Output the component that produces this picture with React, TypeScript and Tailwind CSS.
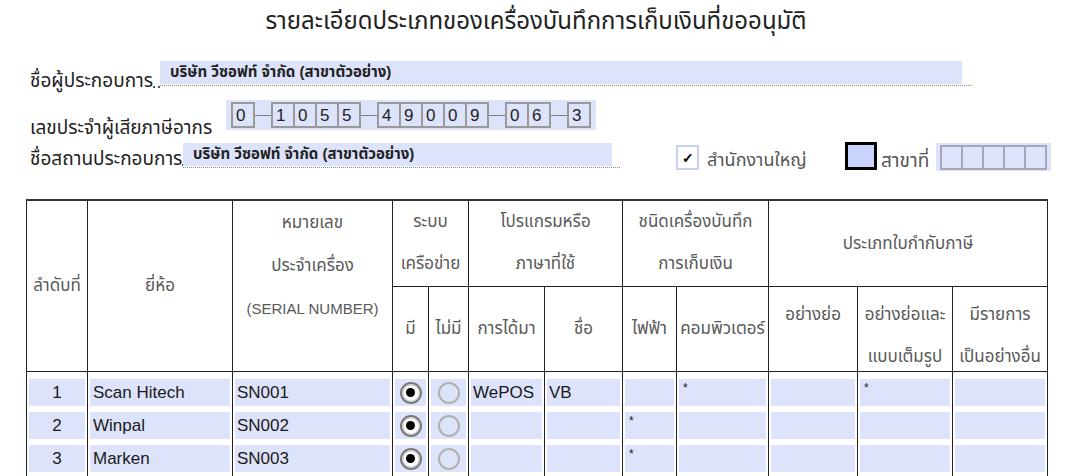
const taxGroups = [["0"], ["1", "0", "5", "5"], ["4", "9", "0", "0", "9"], ["0", "6"], ["3"]];

type Row = {
  no: string;
  brand: string;
  serial: string;
  acquired: string;
  name: string;
  electric: string;
  computer: string;
  abbreviated: string;
  full: string;
  other: string;
};

const rows: Row[] = [
  { no: "1", brand: "Scan Hitech", serial: "SN001", acquired: "WePOS", name: "VB", electric: "", computer: "*", abbreviated: "", full: "*", other: "" },
  { no: "2", brand: "Winpal", serial: "SN002", acquired: "", name: "", electric: "*", computer: "", abbreviated: "", full: "", other: "" },
  { no: "3", brand: "Marken", serial: "SN003", acquired: "", name: "", electric: "*", computer: "", abbreviated: "", full: "", other: "" },
];

function Radio({ checked }: { checked: boolean }) {
  return checked ? (
    <span className="flex h-[22px] w-[22px] items-center justify-center rounded-full border-2 border-[#7a7a7a] bg-white shadow-[inset_0_0_0_1.5px_#d4d4d4]">
      <span className="h-[9px] w-[9px] rounded-full bg-black" />
    </span>
  ) : (
    <span className="block h-[22px] w-[22px] rounded-full border-2 border-[#b0b0b0] shadow-[inset_0_0_0_1px_#e4e4e4]" />
  );
}

function Fill({ children, className = "" }: { children?: React.ReactNode; className?: string }) {
  return <div className={`mx-[2px] mt-[2px] flex h-[27px] items-center bg-[#dde3fb] ${className}`}>{children}</div>;
}

function Star({ value }: { value: string }) {
  return <Fill className="items-start px-[4px] pt-[3px] text-[12px] leading-none">{value}</Fill>;
}

export default function App() {
  return (
    <div className="h-[476px] w-[1072px] overflow-hidden bg-white font-['Liberation_Sans','Noto_Sans_Thai','Noto_Sans',sans-serif] text-[#222]">
      <h1 className="h-[58px] pt-[5px] text-center text-[24px] leading-[32px] text-[#222]">
        รายละเอียดประเภทของเครื่องบันทึกการเก็บเงินที่ขออนุมัติ
      </h1>

      {/* ชื่อผู้ประกอบการ */}
      <div className="flex h-[36px] pl-[30px]">
        <div className="flex w-[130px] items-end self-end overflow-hidden">
          <span className="whitespace-nowrap text-[19px] leading-[26px]">ชื่อผู้ประกอบการ</span>
          <span className="mb-[6px] h-[2px] flex-1 border-b-2 border-dotted border-[#555]" />
        </div>
        <div className="mt-[3px] h-[25px] w-[811px] border-b border-dotted border-[#8a8a8a]">
          <div className="flex h-[23px] w-[802px] items-center bg-[#dde3fb] pl-[10px] text-[15px] font-bold">
            บริษัท วีซอฟท์ จำกัด (สาขาตัวอย่าง)
          </div>
        </div>
      </div>

      {/* เลขประจำผู้เสียภาษีอากร */}
      <div className="flex h-[46px] pl-[30px]">
        <span className="-mb-[1px] w-[196px] self-end whitespace-nowrap text-[19px] leading-[26px]">เลขประจำผู้เสียภาษีอากร</span>
        <div className="mt-[6px] flex h-[30px] items-center self-start bg-[#dde3fb] px-[5px]">
          {taxGroups.map((group, gi) => (
            <div key={gi} className="flex items-center">
              {gi > 0 && <span className="h-px w-[16px] bg-[#7d7d7d]" />}
              {group.map((d, di) => (
                <span
                  key={di}
                  className={`flex h-[26px] w-[24px] items-center border-2 border-[#9a9a9a] pl-[3px] text-[17px] leading-none ${di > 0 ? "-ml-[2px]" : ""}`}
                >
                  {d}
                </span>
              ))}
            </div>
          ))}
        </div>
      </div>

      {/* ชื่อสถานประกอบการ */}
      <div className="flex h-[59px] pl-[30px]">
        <div className="flex w-[153px] items-end self-start overflow-hidden pt-[6px]">
          <span className="whitespace-nowrap text-[19px] leading-[26px]">ชื่อสถานประกอบการ</span>
          <span className="mb-[6px] h-[2px] flex-1 border-b-2 border-dotted border-[#555]" />
        </div>
        <div className="mt-[3px] h-[25px] w-[437px] border-b border-dotted border-[#8a8a8a]">
          <div className="flex h-[23px] w-[429px] items-center bg-[#dde3fb] pl-[10px] text-[15px] font-bold">
            บริษัท วีซอฟท์ จำกัด (สาขาตัวอย่าง)
          </div>
        </div>
        <div className="ml-[56px] mt-[5px] flex h-[25px] w-[23px] items-center justify-center self-start border-2 border-[#c7d0f6] bg-white text-[14px] font-bold leading-none text-black">
          ✓
        </div>
        <span className="ml-[8px] w-[138px] self-start whitespace-nowrap pt-[8px] text-[18px] leading-[24px] text-[#555]">สำนักงานใหญ่</span>
        <div className="mt-[2px] h-[28px] w-[32px] self-start border-[3px] border-black bg-[#c9d3fb]" />
        <span className="ml-[4px] w-[55px] self-start whitespace-nowrap pt-[9px] text-[19px] leading-[24px] text-[#555]">สาขาที่</span>
        <div className="mt-[3px] flex h-[28px] items-center self-start bg-[#dde3fb] px-[4px]">
          {[0, 1, 2, 3, 4].map((i) => (
            <span key={i} className={`h-[25px] w-[23px] border-2 border-[#a3a7b8] ${i > 0 ? "-ml-[2px]" : ""}`} />
          ))}
        </div>
      </div>

      <table className="ml-[26px] w-[1021px] table-fixed border-collapse text-[17px] text-[#595959]">
        <colgroup>
          <col className="w-[61px]" />
          <col className="w-[145px]" />
          <col className="w-[160px]" />
          <col className="w-[36px]" />
          <col className="w-[40px]" />
          <col className="w-[76px]" />
          <col className="w-[78px]" />
          <col className="w-[54px]" />
          <col className="w-[92px]" />
          <col className="w-[89px]" />
          <col className="w-[95px]" />
          <col className="w-[95px]" />
        </colgroup>
        <thead>
          <tr className="h-[86px] border-t-2 border-[#333]">
            <th rowSpan={2} className="border border-[#222] p-0 text-center font-normal">ลำดับที่</th>
            <th rowSpan={2} className="border border-[#222] p-0 text-center font-normal">ยี่ห้อ</th>
            <th rowSpan={2} className="border border-[#222] p-0 text-center align-top font-normal leading-[43px]">
              หมายเลข
              <br />
              ประจำเครื่อง
              <br />
              <span className="text-[15px]">(SERIAL NUMBER)</span>
            </th>
            <th colSpan={2} className="border border-[#222] p-0 text-center font-normal leading-[42px]">
              ระบบ
              <br />
              เครือข่าย
            </th>
            <th colSpan={2} className="border border-[#222] p-0 text-center font-normal leading-[42px]">
              โปรแกรมหรือ
              <br />
              ภาษาที่ใช้
            </th>
            <th colSpan={2} className="border border-[#222] p-0 text-center font-normal leading-[42px]">
              ชนิดเครื่องบันทึก
              <br />
              การเก็บเงิน
            </th>
            <th colSpan={3} className="border border-[#222] p-0 text-center font-normal">ประเภทใบกำกับภาษี</th>
          </tr>
          <tr className="h-[85px]">
            <th className="border border-[#222] p-0 text-center font-normal">มี</th>
            <th className="border border-[#222] p-0 text-center font-normal">ไม่มี</th>
            <th className="border border-[#222] p-0 text-center font-normal">การได้มา</th>
            <th className="border border-[#222] p-0 text-center font-normal">ชื่อ</th>
            <th className="border border-[#222] p-0 text-center font-normal">ไฟฟ้า</th>
            <th className="border border-[#222] p-0 text-center font-normal">คอมพิวเตอร์</th>
            <th className="border border-[#222] p-0 text-center align-top font-normal">
              <div className="h-[84px] pt-[7px] leading-[42px]">อย่างย่อ</div>
            </th>
            <th className="border border-[#222] p-0 text-center align-top font-normal">
              <div className="h-[84px] pt-[7px] leading-[42px]">
                อย่างย่อและ
                <br />
                แบบเต็มรูป
              </div>
            </th>
            <th className="border border-[#222] p-0 text-center align-top font-normal">
              <div className="h-[84px] pt-[7px] leading-[42px]">
                มีรายการ
                <br />
                เป็นอย่างอื่น
              </div>
            </th>
          </tr>
        </thead>
        <tbody className="text-[17px] text-[#1a1a1a]">
          <tr className="h-[6px]">
            {Array.from({ length: 12 }).map((_, i) => (
              <td key={i} className="border-x border-[#222] p-0" />
            ))}
          </tr>
          {rows.map((r) => (
            <tr key={r.no} className="h-[33px]">
              <td className="border-x border-[#222] p-0 align-top">
                <Fill className="justify-center">{r.no}</Fill>
              </td>
              <td className="border-x border-[#222] p-0 align-top">
                <Fill className="px-[3px]">{r.brand}</Fill>
              </td>
              <td className="border-x border-[#222] p-0 align-top">
                <Fill className="px-[2px]">{r.serial}</Fill>
              </td>
              <td className="border-x border-[#222] p-0 align-top">
                <Fill className="justify-center">
                  <Radio checked />
                </Fill>
              </td>
              <td className="border-x border-[#222] p-0 align-top">
                <Fill className="justify-center">
                  <Radio checked={false} />
                </Fill>
              </td>
              <td className="border-x border-[#222] p-0 align-top">
                <Fill className="px-[2px]">{r.acquired}</Fill>
              </td>
              <td className="border-x border-[#222] p-0 align-top">
                <Fill className="px-[2px]">{r.name}</Fill>
              </td>
              <td className="border-x border-[#222] p-0 align-top">
                <Star value={r.electric} />
              </td>
              <td className="border-x border-[#222] p-0 align-top">
                <Star value={r.computer} />
              </td>
              <td className="border-x border-[#222] p-0 align-top">
                <Star value={r.abbreviated} />
              </td>
              <td className="border-x border-[#222] p-0 align-top">
                <Star value={r.full} />
              </td>
              <td className="border-x border-[#222] p-0 align-top">
                <Star value={r.other} />
              </td>
            </tr>
          ))}
        </tbody>
      </table>
    </div>
  );
}
